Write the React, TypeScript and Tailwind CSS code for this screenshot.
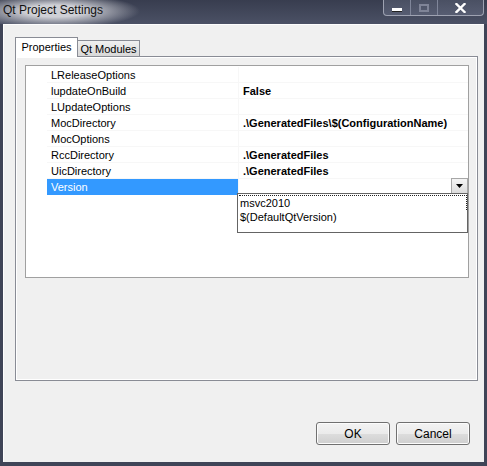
import React from 'react';

type Prop = { name: string; value?: string };

const props: Prop[] = [
  { name: 'LReleaseOptions' },
  { name: 'lupdateOnBuild', value: 'False' },
  { name: 'LUpdateOptions' },
  { name: 'MocDirectory', value: '.\\GeneratedFiles\\$(ConfigurationName)' },
  { name: 'MocOptions' },
  { name: 'RccDirectory', value: '.\\GeneratedFiles' },
  { name: 'UicDirectory', value: '.\\GeneratedFiles' },
];

const TitleBar = () => (
  <div className="h-[24px] flex items-start bg-[radial-gradient(ellipse_85px_17px_at_55px_11px,#cfd0d6_35%,rgba(120,124,140,0)_100%),linear-gradient(#383d4f,#4b5165)] -mx-[3px]">
    <span className="pl-[3px] pt-[3px] text-[12px] leading-[15px] text-[#111]">Qt Project Settings</span>
    <div className="ml-auto mr-[3px] flex h-[16px] border border-t-0 border-[#9ea2b1] rounded-b-[4px] overflow-hidden bg-[linear-gradient(#4a5063,#575d72)]">
      <div className="w-[27px] flex items-center justify-center border-r border-[#80869a]">
        <div className="w-[10px] h-[3px] bg-white mt-[4px] shadow-[0_1px_0_#222]" />
      </div>
      <div className="w-[27px] flex items-center justify-center border-r border-[#80869a]">
        <div className="w-[10px] h-[8px] border-2 border-[#7f8497]" />
      </div>
      <div className="w-[45px] flex items-center justify-center">
        <svg width="11" height="10" viewBox="0 0 11 10">
          <path d="M1.5 1 L9.5 9 M9.5 1 L1.5 9" stroke="#fff" strokeWidth="2.4" strokeLinecap="square" />
        </svg>
      </div>
    </div>
  </div>
);

const Row = ({ name, value, selected }: { name: string; value?: string; selected?: boolean }) => (
  <div className="flex h-[16px] leading-[16px]">
    <div className="w-[21px] shrink-0" />
    <div
      className={
        selected
          ? 'w-[191px] shrink-0 pl-[4px] bg-[#3399ff] text-white'
          : 'w-[191px] shrink-0 pl-[4px] border-b border-[#f7f7f7]'
      }
    >
      {name}
    </div>
    <div className="flex-1 pl-[4px] font-bold whitespace-nowrap border-b border-l border-[#f7f7f7] flex">
      {value}
      {selected && (
        <div className="ml-auto mt-[-1px] w-[17px] h-[16px] border border-[#a7a7a7] bg-[linear-gradient(#f4f4f4,#dcdcdc)] flex items-center justify-center">
          <svg width="7" height="4" viewBox="0 0 7 4">
            <path d="M0 0 H7 L3.5 4 Z" fill="#000" />
          </svg>
        </div>
      )}
    </div>
  </div>
);

export default function App() {
  return (
    <div className="w-[487px] h-[466px] bg-[#3f4457] flex flex-col px-[3px] pb-[4px] font-['Liberation_Sans',Arial,sans-serif] text-[11px] text-black">
      <TitleBar />
      <div className="flex-1 bg-[#f0f0f0] border-t border-l border-[#fdfdfd] flex flex-col pl-[11px] pr-[6px]">
        {/* tabs */}
        <div className="mt-[12px] h-[19px] flex items-end">
          <div className="relative z-10 -mb-px h-[20px] w-[63px] bg-white border border-b-0 border-[#898c95] flex justify-center pt-[2px] leading-[14px]">
            Properties
          </div>
          <div className="h-[16px] w-[62px] bg-[linear-gradient(#f0f0f0,#d8d8d8)] border border-l-0 border-b-0 border-[#898c95] flex justify-center pt-[2px] leading-[13px]">
            Qt Modules
          </div>
        </div>
        {/* tab page */}
        <div className="h-[325px] border border-[#898c95] shadow-[inset_1px_1px_0_#fff,inset_-1px_-1px_0_#fff] pl-[9px] pt-[8px]">
          <div className="relative w-[444px] h-[213px] bg-white border border-[#a0a0a0] pt-[1px]">
            {props.map((p) => (
              <Row key={p.name} name={p.name} value={p.value} />
            ))}
            <Row name="Version" selected />
            {/* open combo list */}
            <div className="absolute left-[211px] top-[127px] w-[231px] h-[40px] bg-white border border-[#646464] pl-[1px] pt-px leading-[14px] font-normal">
              <div className="h-[15px] pl-[1px] border border-dotted border-[#222] border-l-0 border-b-0">msvc2010</div>
              <div className="h-[14px] pl-[1px]">$(DefaultQtVersion)</div>
            </div>
          </div>
        </div>
        <div className="flex-1" />
        {/* dialog buttons */}
        <div className="flex justify-end gap-[6px] pr-[8px] mb-[17px]">
          <button className="w-[74px] h-[23px] rounded-[3px] border border-[#707070] bg-[linear-gradient(#f3f3f3_0%,#ebebeb_50%,#dddddd_51%,#cfcfcf_100%)] shadow-[inset_0_0_0_1px_#fcfcfc] text-[12px] leading-[20px]">
            OK
          </button>
          <button className="w-[74px] h-[23px] rounded-[3px] border border-[#707070] bg-[linear-gradient(#f3f3f3_0%,#ebebeb_50%,#dddddd_51%,#cfcfcf_100%)] shadow-[inset_0_0_0_1px_#fcfcfc] text-[12px] leading-[20px]">
            Cancel
          </button>
        </div>
      </div>
    </div>
  );
}
